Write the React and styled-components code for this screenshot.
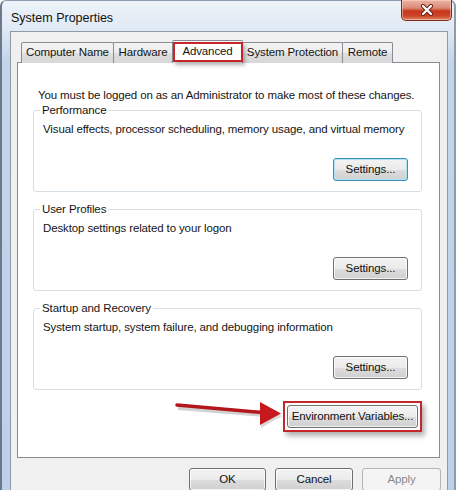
import React from "react";
import styled, { createGlobalStyle, css } from "styled-components";

const GlobalStyle = createGlobalStyle`
  html, body {
    margin: 0;
    padding: 0;
    background: #ffffff;
    overflow: hidden;
  }
  body {
    font-family: "Liberation Sans", Arial, sans-serif;
    font-size: 11.5px;
    letter-spacing: -0.12px;
    color: #151515;
  }
`;

const Window = styled.div`
  width: 456px;
  height: 520px;
  box-sizing: border-box;
  border-left: 2px solid #6a7a8c;
  border-right: 2px solid #8d9cad;
  border-top: 1px solid #8d9cad;
  border-radius: 6px 6px 0 0;
  background: linear-gradient(180deg, #eef3f9 0px, #dfe8f3 30px, #c3d5ea 60px, #bcd0e8 100%);
  display: flex;
  flex-direction: column;
`;

const TitleBar = styled.div`
  height: 30px;
  display: flex;
  justify-content: space-between;
  align-items: flex-start;
  padding: 0 2px 0 9px;
`;

const Title = styled.div`
  padding-top: 9px;
  font-size: 12.5px;
  letter-spacing: 0;
  line-height: 16px;
  color: #111;
`;

const CloseButton = styled.div`
  width: 51px;
  height: 21px;
  margin-top: -1px;
  box-sizing: border-box;
  border: 1px solid #7a2c1e;
  border-top: none;
  border-radius: 0 0 5px 5px;
  background: linear-gradient(180deg, #ecb4a4 0%, #dc8a74 40%, #c7361b 55%, #cc4629 80%, #e08768 100%);
  box-shadow: inset 0 0 0 1px rgba(255, 220, 210, 0.5);
  display: flex;
  align-items: center;
  justify-content: center;
`;

const Client = styled.div`
  flex: 1;
  margin: 0 6px 0 8px;
  border: 1px solid #8e9aa8;
  border-bottom: none;
  background: #f0f0f0;
  padding: 8px 7px 0 6px;
  display: flex;
  flex-direction: column;
`;

const TabStrip = styled.div`
  display: flex;
  align-items: flex-end;
  height: 23px;
  padding-left: 4px;
  margin-bottom: -1px;
`;

const Tab = styled.div`
  position: relative;
  box-sizing: border-box;
  width: ${(p) => p.$w}px;
  height: 21px;
  margin-right: -1px;
  border: 1px solid #898c95;
  border-bottom: none;
  border-radius: 2px 2px 0 0;
  background: linear-gradient(180deg, #f4f4f4 0%, #ececec 50%, #dedede 51%, #d8d8d8 100%);
  line-height: 19px;
  text-align: center;
  white-space: nowrap;
  ${(p) =>
    p.$active &&
    css`
      height: 23px;
      z-index: 1;
      background: #ffffff;
      line-height: 20px;
    `}
`;

const RedMark = styled.span`
  position: absolute;
  left: 0;
  right: -1px;
  top: 1px;
  bottom: 1px;
  border: 2px solid #c4262c;
  box-shadow: 2px 3px 4px rgba(0, 0, 0, 0.3);
  pointer-events: none;
`;

const Panel = styled.div`
  box-sizing: border-box;
  height: 396px;
  background: #ffffff;
  border: 1px solid #898c95;
  padding: 25px 17px 0 15px;
  display: flex;
  flex-direction: column;
  gap: 10px;
`;

const Intro = styled.div`
  line-height: 15px;
  padding-left: 5px;
  margin-bottom: -10px;
  white-space: nowrap;
`;

const Group = styled.fieldset`
  margin: 0;
  box-sizing: border-box;
  height: 89px;
  border: 1px solid #d5dfe5;
  border-radius: 3px;
  padding: 0 13px 0 6px;
`;

const Legend = styled.legend`
  padding: 0 2px;
  line-height: 15px;
`;

const Description = styled.div`
  margin-top: 4px;
  padding-left: 3px;
  line-height: 15px;
  white-space: nowrap;
`;

const ButtonRow = styled.div`
  display: flex;
  justify-content: flex-end;
  margin-top: 21px;
`;

const Button = styled.div`
  box-sizing: border-box;
  width: ${(p) => p.$w || 75}px;
  height: 23px;
  border: 1px solid #707070;
  border-radius: 3px;
  background: linear-gradient(180deg, #f3f3f3 0%, #ebebeb 50%, #dddddd 51%, #d0d0d0 100%);
  box-shadow: inset 0 0 0 1px rgba(255, 255, 255, 0.75);
  line-height: 21px;
  text-align: center;
  white-space: nowrap;
  color: #111;
  ${(p) =>
    p.$focus &&
    css`
      border-color: #3f8db4;
      box-shadow: inset 0 0 0 1px #aee4f6;
    `}
  ${(p) =>
    p.$disabled &&
    css`
      border-color: #b2b6b9;
      background: #f4f4f4;
      box-shadow: none;
      color: #8a8a8a;
    `}
`;

const EnvRow = styled.div`
  display: flex;
  justify-content: flex-end;
  align-items: flex-start;
  margin-top: 1px;
`;

const Highlight = styled.div`
  border: 2px solid #c4262c;
  padding: 2px;
  box-shadow: 3px 4px 5px rgba(0, 0, 0, 0.3);
`;

const Footer = styled.div`
  display: flex;
  justify-content: flex-end;
  gap: 9px;
  margin-top: 10px;
  margin-right: -1px;
`;

const tabs = [
  { label: "Computer Name", w: 93 },
  { label: "Hardware", w: 60 },
  { label: "Advanced", w: 71, active: true },
  { label: "System Protection", w: 101 },
  { label: "Remote", w: 51 },
];

const groups = [
  {
    title: "Performance",
    text: "Visual effects, processor scheduling, memory usage, and virtual memory",
    focus: true,
  },
  { title: "User Profiles", text: "Desktop settings related to your logon" },
  {
    title: "Startup and Recovery",
    text: "System startup, system failure, and debugging information",
  },
];

const CloseIcon = () => (
  <svg width="14" height="12" viewBox="0 0 14 12">
    <path d="M3 2 L11 10 M11 2 L3 10" stroke="#5a1a10" strokeWidth="4" strokeLinecap="round" />
    <path d="M3 2 L11 10 M11 2 L3 10" stroke="#ffffff" strokeWidth="2.4" strokeLinecap="round" />
  </svg>
);

const Arrow = () => (
  <svg width="112" height="30" viewBox="0 0 112 30">
    <path d="M6 5 L92 12" stroke="rgba(0,0,0,0.18)" strokeWidth="4" transform="translate(1 2)" />
    <path d="M6 4 L92 11.5" stroke="#b3161c" strokeWidth="3.5" strokeLinecap="round" />
    <polygon points="89,2 110,13 89,25" fill="rgba(0,0,0,0.15)" transform="translate(1 2)" />
    <polygon points="89,1 110,12.5 89,24" fill="#c8181f" />
  </svg>
);

export default function App() {
  return (
    <>
      <GlobalStyle />
      <Window>
        <TitleBar>
          <Title>System Properties</Title>
          <CloseButton>
            <CloseIcon />
          </CloseButton>
        </TitleBar>
        <Client>
          <TabStrip>
            {tabs.map((t) => (
              <Tab key={t.label} $w={t.w} $active={t.active}>
                {t.label}
                {t.active && <RedMark />}
              </Tab>
            ))}
          </TabStrip>
          <Panel>
            <Intro>You must be logged on as an Administrator to make most of these changes.</Intro>
            {groups.map((g) => (
              <Group key={g.title}>
                <Legend>{g.title}</Legend>
                <Description>{g.text}</Description>
                <ButtonRow>
                  <Button $focus={g.focus}>Settings...</Button>
                </ButtonRow>
              </Group>
            ))}
            <EnvRow>
              <Arrow />
              <Highlight>
                <Button $w={131}>Environment Variables...</Button>
              </Highlight>
            </EnvRow>
          </Panel>
          <Footer>
            <Button $w={77}>OK</Button>
            <Button $w={78}>Cancel</Button>
            <Button $w={79} $disabled>
              Apply
            </Button>
          </Footer>
        </Client>
      </Window>
    </>
  );
}
